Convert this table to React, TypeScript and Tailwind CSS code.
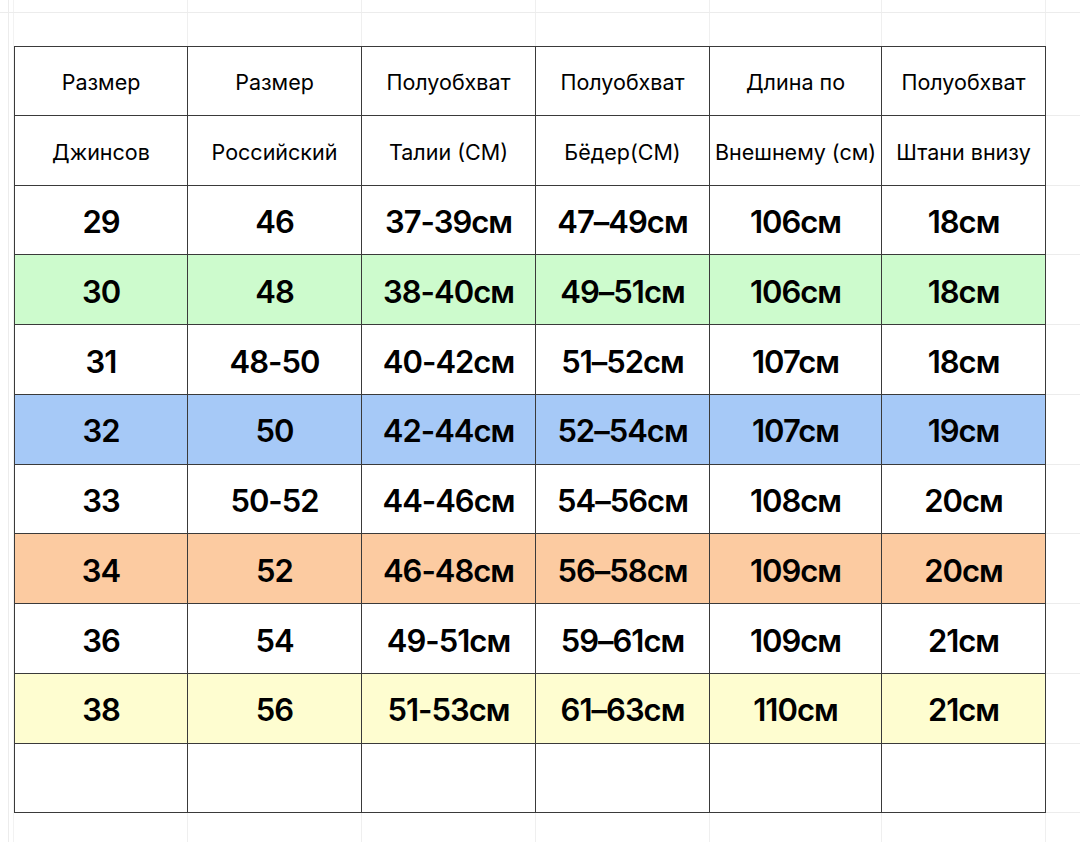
const cols = ["w-[174px]", "w-[174px]", "w-[174px]", "w-[174px]", "w-[172px]", "w-[164px]"];

const header1 = ["Размер", "Размер", "Полуобхват", "Полуобхват", "Длина по", "Полуобхват"];
const header2 = ["Джинсов", "Российский", "Талии (СМ)", "Бёдер(СМ)", "Внешнему (см)", "Штани внизу"];

const rows: { bg: string; cells: string[] }[] = [
  { bg: "bg-white", cells: ["29", "46", "37-39см", "47–49см", "106см", "18см"] },
  { bg: "bg-[#cdfbcd]", cells: ["30", "48", "38-40см", "49–51см", "106см", "18см"] },
  { bg: "bg-white", cells: ["31", "48-50", "40-42см", "51–52см", "107см", "18см"] },
  { bg: "bg-[#a6c9f7]", cells: ["32", "50", "42-44см", "52–54см", "107см", "19см"] },
  { bg: "bg-white", cells: ["33", "50-52", "44-46см", "54–56см", "108см", "20см"] },
  { bg: "bg-[#fccba1]", cells: ["34", "52", "46-48см", "56–58см", "109см", "20см"] },
  { bg: "bg-white", cells: ["36", "54", "49-51см", "59–61см", "109см", "21см"] },
  { bg: "bg-[#fefdd0]", cells: ["38", "56", "51-53см", "61–63см", "110см", "21см"] },
];

function Gutter() {
  return (
    <>
      <div className="w-[9px] shrink-0 border-r border-[#ececec]" />
      <div className="w-[5px] shrink-0 border-r border-[#f2f2f2]" />
    </>
  );
}

function FaintRow({ h, line }: { h: string; line?: boolean }) {
  return (
    <div className={`flex ${h} shrink-0 ${line ? "border-b border-[#ececec]" : ""}`}>
      <Gutter />
      {cols.map((w, i) => (
        <div key={i} className={`${w} shrink-0 border-r border-[#efefef]`} />
      ))}
      <div className="flex-1" />
    </div>
  );
}

function TableRow({ cells, bg, head, first }: { cells: string[]; bg: string; head?: boolean; first?: boolean }) {
  return (
    <div className="flex h-[69.75px] shrink-0">
      <Gutter />
      {cells.map((c, i) => (
        <div
          key={i}
          className={`${cols[i]} shrink-0 ${bg} flex items-center justify-center border-b border-r border-[#3a3a3a] ${
            i === 0 ? "border-l" : ""
          } ${first ? "border-t" : ""} ${
            head ? "text-[21.5px] font-normal pt-[3px]" : "text-[31px] font-semibold tracking-[-1px] pt-[5px]"
          } text-black whitespace-nowrap`}
        >
          {c}
        </div>
      ))}
      <div className="flex-1 border-b border-[#ececec]" />
    </div>
  );
}

export default function App() {
  return (
    <div className="w-[1080px] h-[842px] bg-white overflow-hidden flex flex-col font-['Inter','Noto_Sans',sans-serif]">
      <FaintRow h="h-[13px]" line />
      <FaintRow h="h-[33px]" />
      <TableRow cells={header1} bg="bg-white" head first />
      <TableRow cells={header2} bg="bg-white" head />
      {rows.map((r, i) => (
        <TableRow key={i} cells={r.cells} bg={r.bg} />
      ))}
      <TableRow cells={["", "", "", "", "", ""]} bg="bg-white" />
      <FaintRow h="flex-1" />
    </div>
  );
}
